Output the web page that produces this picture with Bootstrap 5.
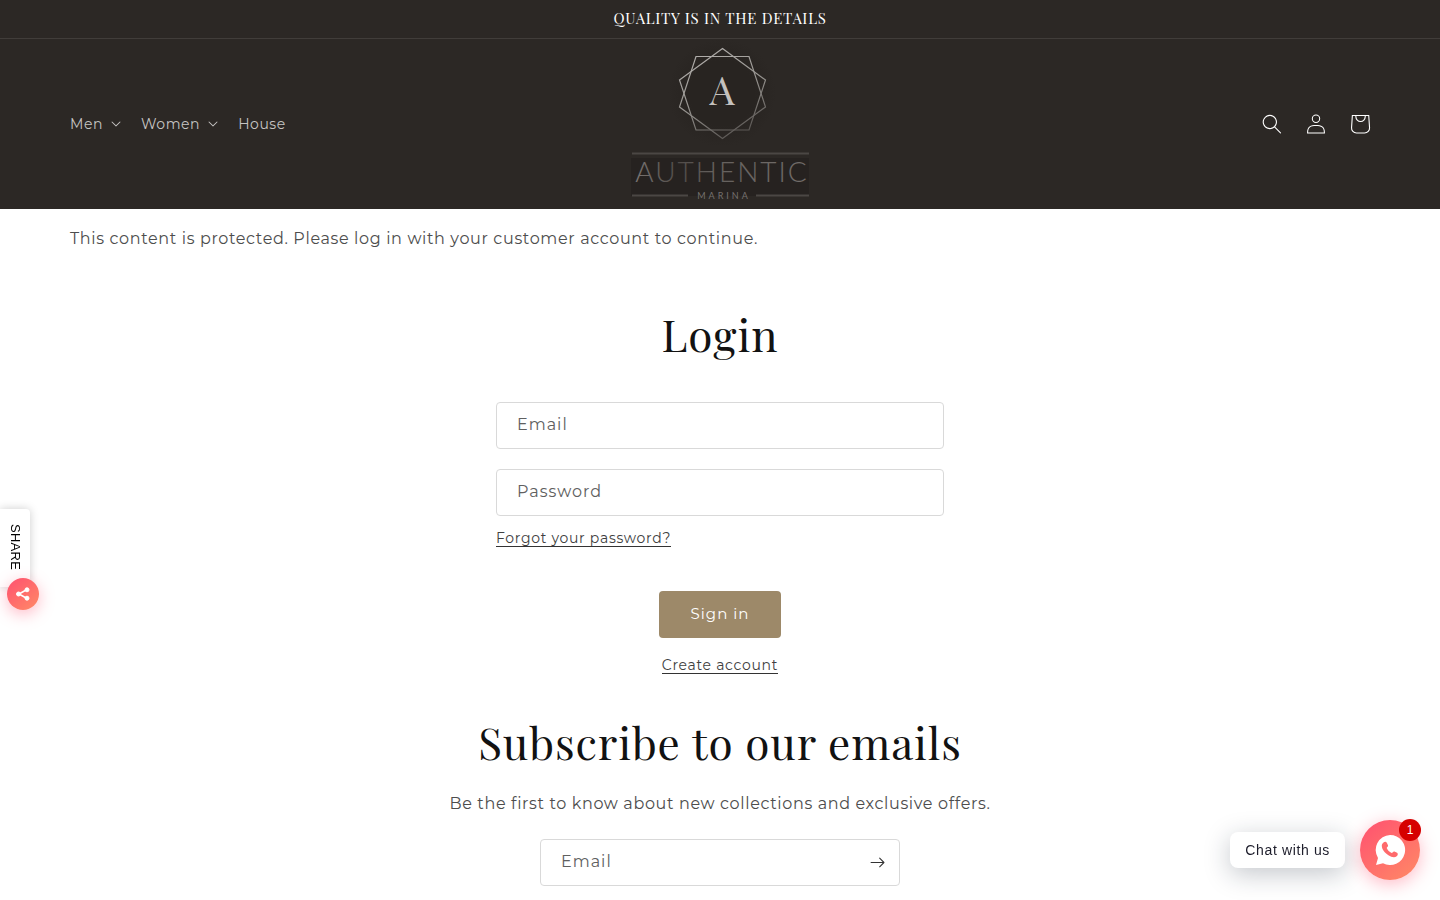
<!DOCTYPE html>
<html lang="en">
<head>
<meta charset="utf-8">
<meta name="viewport" content="width=device-width, initial-scale=1">
<title>Login – Authentic Marina</title>
<link href="https://cdn.jsdelivr.net/npm/bootstrap@5.3.0/dist/css/bootstrap.min.css" rel="stylesheet">
<script src="https://cdn.jsdelivr.net/npm/bootstrap@5.3.0/dist/js/bootstrap.bundle.min.js" defer></script>
<style>
:root{--ink:#121212;--soft:#4d4d4d;--dark:#2c2825;--sand:#9d8969;--coral:linear-gradient(140deg,#ff5070,#ff8a66)}
body{font-family:Montserrat,Inter,"Open Sans",sans-serif;font-size:16px;line-height:28px;letter-spacing:.04em;color:var(--soft);background:#fff}
.display-face{font-family:"Playfair Display","Liberation Serif",serif;font-weight:400}
.announcement{background:var(--dark);color:#fff;font-size:15px;line-height:22px;letter-spacing:.05em;padding:7px 8px 9px;border-bottom:1px solid #413d3a}
.site-header{background:var(--dark);color:#fff}
.page-width{max-width:1400px;padding-left:50px;padding-right:50px}
.header-side{flex:1 1 0}
.menu-item{background:none;border:0;padding:0;color:#c6c4c3;font-size:14px;letter-spacing:.04em;text-decoration:none}
.icon-slot{width:44px;height:44px}
.icons-end{margin-right:-12px}
.heading-lg{color:var(--ink);font-size:44px;line-height:60px;letter-spacing:.02em}
.login-box{max-width:448px;padding-top:3px}
.login-form{padding-top:38px}
.news-box{max-width:360px;margin-top:21px}
.field-wrap{margin-bottom:20px}
.field{height:47px;border:1px solid #d9d9d9;border-radius:4px;padding:0 20px;font-size:16px;letter-spacing:1px;color:var(--ink)}
.field-label{left:21px;top:9px;color:#606060;letter-spacing:1px;pointer-events:none}
.field:not(:placeholder-shown) + .field-label{display:none}
.text-link{display:inline-block;color:#404040;font-size:14px;line-height:16px;letter-spacing:.05em;text-decoration:none;padding-top:1px;border-bottom:1px solid #333}
.forgot{margin:-7px 0 44px}
.create{margin-top:18px}
.btn-sand{--bs-btn-color:#fff;--bs-btn-bg:var(--sand);--bs-btn-hover-color:#fff;--bs-btn-hover-bg:#8c795b;--bs-btn-border-radius:4px;width:122px;height:47px;font-size:15px;letter-spacing:1px;border:0}
.subscribe{padding-top:38px}
.subscribe-text{margin:18px 0 0}
.send{right:0;top:0;width:45px;height:47px;background:none;border:0}
.share{left:0;top:509px;width:39px}
.share-tab{width:30px;height:78px;background:#fff;border-radius:0 4px 4px 0;box-shadow:0 0 10px rgba(0,0,0,.2);font:13px "Liberation Sans",sans-serif;letter-spacing:.02em;color:#000;writing-mode:vertical-rl;padding:15px 0 0}
.share-btn{width:32px;height:32px;border:0;border-radius:50%;background:var(--coral);box-shadow:0 4px 16px rgba(255,80,112,.4);margin:-9px 0 0 7px;position:relative}
.chat{right:20px;bottom:20px;gap:15px}
.chat-label{background:#fff;color:#1d1d2b;border-radius:8px;padding:8px 15px;font:14px/20px "Liberation Sans",sans-serif;box-shadow:0 6px 26px rgba(20,30,50,.25)}
.chat-btn{width:60px;height:60px;border:0;border-radius:50%;background:var(--coral);box-shadow:0 4px 18px rgba(255,80,112,.4)}
.chat-count{right:-1px;top:-1px;width:22px;height:22px;border-radius:50%;background:#d60000;color:#fff;font:12px/22px "Liberation Sans",sans-serif;letter-spacing:0}
</style>
</head>
<body>
<div class="announcement text-center display-face">QUALITY IS IN THE DETAILS</div>
<header class="site-header">
  <div class="page-width container-fluid d-flex align-items-center">
    <nav class="header-side d-flex" aria-label="Main">
      <button class="menu-item d-flex align-items-center me-3" type="button"><span>Men</span>
        <svg class="ms-2 me-1" width="10" height="6" viewBox="0 0 10 6" fill="currentColor"><path d="M9.354.646a.5.5 0 00-.708 0L5 4.293 1.354.646a.5.5 0 00-.708.708l4 4a.5.5 0 00.708 0l4-4a.5.5 0 000-.708z"/></svg></button>
      <button class="menu-item d-flex align-items-center me-3" type="button"><span>Women</span>
        <svg class="ms-2 me-1" width="10" height="6" viewBox="0 0 10 6" fill="currentColor"><path d="M9.354.646a.5.5 0 00-.708 0L5 4.293 1.354.646a.5.5 0 00-.708.708l4 4a.5.5 0 00.708 0l4-4a.5.5 0 000-.708z"/></svg></button>
      <a class="menu-item" href="#">House</a>
    </nav>
    <a href="#" aria-label="Authentic Marina">
      <svg class="d-block" width="180" height="170" viewBox="0 0 180 170" fill="none">
        <defs>
          <linearGradient id="metal" gradientUnits="userSpaceOnUse" x1="60" y1="10" x2="100" y2="100"><stop stop-color="#b5b2af"/><stop offset=".55" stop-color="#96938f"/><stop offset="1" stop-color="#5a5653"/></linearGradient>
          <linearGradient id="word" x1="0" x2="1" y1="0" y2="0"><stop stop-color="#7a7572"/><stop offset=".25" stop-color="#504b48"/><stop offset=".45" stop-color="#64605d"/><stop offset="1" stop-color="#726d6a"/></linearGradient>
          <radialGradient id="shade"><stop offset=".6" stop-color="#282421"/><stop offset="1" stop-color="#282421" stop-opacity="0"/></radialGradient>
        </defs>
        <circle cx="92" cy="54" r="54" fill="url(#shade)"/>
        <path d="M1 119h178v38H1z" fill="#262220"/>
        <g stroke="url(#metal)" stroke-width="1.2">
          <path d="M92.500 9.500 135.500 41 119 91H66L49.500 41z"/>
          <path d="M92.500 99.500 49.500 68 66 17.500h53L135.500 68z"/>
        </g>
        <text x="92" y="66" text-anchor="middle" font-family="Playfair Display, Liberation Serif, serif" font-size="40" letter-spacing="0" fill="#c4c1be">A</text>
        <path d="M2 114.500h177" stroke="#4b4744" stroke-width="2"/>
        <path d="M2 156.500h56M126 156.500h53" stroke="#4b4744" stroke-width="2"/>
        <text x="92" y="143" text-anchor="middle" font-family="Lato, sans-serif" font-weight="300" font-size="28" letter-spacing="2" fill="url(#word)">AUTHENTIC</text>
        <text x="94" y="160" text-anchor="middle" font-family="Lato, sans-serif" font-size="9" letter-spacing="3" fill="#75716e">MARINA</text>
      </svg>
    </a>
    <div class="header-side d-flex justify-content-end">
      <div class="icons-end d-flex">
        <a class="icon-slot d-flex align-items-center justify-content-center text-white" href="#" aria-label="Search"><svg width="20" height="20" viewBox="0 0 18 19" fill="currentColor"><path fill-rule="evenodd" d="M11.03 11.68A5.784 5.784 0 112.85 3.5a5.784 5.784 0 018.18 8.18zm.26 1.12a6.78 6.78 0 11.72-.7l5.4 5.4a.5.5 0 11-.71.7l-5.41-5.4z"/></svg></a>
        <a class="icon-slot d-flex align-items-center justify-content-center text-white" href="#" aria-label="Log in"><svg width="20" height="20" viewBox="0 0 18 19" fill="currentColor"><path fill-rule="evenodd" d="M6 4.500a3 3 0 116 0 3 3 0 01-6 0zm3-4a4 4 0 100 8 4 4 0 000-8zm5.580 12.150c1.120.820 1.830 2.240 1.910 4.850H1.510c.080-2.600.790-4.030 1.900-4.850C4.660 11.750 6.500 11.500 9 11.500s4.350.260 5.580 1.150zM9 10.500c-2.500 0-4.650.240-6.170 1.350C1.270 12.980.500 14.930.500 18v.500h17V18c0-3.070-.770-5.020-2.330-6.150-1.520-1.100-3.670-1.350-6.170-1.350z"/></svg></a>
        <a class="icon-slot text-white" href="#" aria-label="Cart"><svg class="d-block" width="44" height="44" viewBox="0 0 40 40" fill="currentColor"><path fill-rule="evenodd" d="m15.750 11.800h-3.160l-.770 11.600a5 5 0 0 0 4.990 5.340h7.380a5 5 0 0 0 4.990-5.330l-.780-11.610zm0 1h-2.220l-.710 10.670a4 4 0 0 0 3.990 4.270h7.380a4 4 0 0 0 4-4.270l-.720-10.670h-2.220v.630a4.750 4.750 0 1 1 -9.500 0zm8.500 0h-7.500v.630a3.750 3.750 0 1 0 7.500 0z"/></svg></a>
      </div>
    </div>
  </div>
</header>
<main>
  <p class="page-width container-fluid pt-3 mb-0">This content is protected. Please log in with your customer account to continue.</p>
  <section class="login-box mx-auto text-center mt-5">
    <h1 class="display-face heading-lg mb-0">Login</h1>
    <form class="login-form d-flex flex-column align-items-center">
      <div class="field-wrap position-relative w-100">
        <input class="field w-100 d-block" id="email" type="email" placeholder=" ">
        <label class="field-label position-absolute" for="email">Email</label>
      </div>
      <div class="field-wrap position-relative w-100">
        <input class="field w-100 d-block" id="password" type="password" placeholder=" ">
        <label class="field-label position-absolute" for="password">Password</label>
      </div>
      <a class="text-link forgot align-self-start" href="#">Forgot your password?</a>
      <button class="btn btn-sand" type="submit">Sign in</button>
      <a class="text-link create" href="#">Create account</a>
    </form>
  </section>
  <section class="subscribe text-center">
    <h2 class="display-face heading-lg mb-0">Subscribe to our emails</h2>
    <p class="subscribe-text">Be the first to know about new collections and exclusive offers.</p>
    <form class="news-box mx-auto position-relative">
      <input class="field w-100 d-block" id="news" type="email" placeholder=" ">
      <label class="field-label position-absolute" for="news">Email</label>
      <button class="send position-absolute d-flex align-items-center justify-content-center" type="submit" aria-label="Subscribe"><svg width="15" height="11" viewBox="0 0 14 10" fill="#333"><path fill-rule="evenodd" d="M8.537.808a.5.5 0 01.817-.162l4 4a.5.5 0 010 .708l-4 4a.5.5 0 11-.708-.708L11.793 5.500H1a.5.5 0 010-1h10.793L8.646 1.354a.5.5 0 01-.109-.546z"/></svg></button>
    </form>
  </section>
</main>
<aside class="share position-fixed">
  <div class="share-tab d-flex align-items-center">SHARE</div>
  <button class="share-btn p-0 d-flex align-items-center justify-content-center" type="button" aria-label="Share"><svg width="16" height="14" viewBox="0 0 16 14" fill="#fff" stroke="#fff"><path d="M12 2.500 4 7l8 4.500" fill="none" stroke-width="1.600"/><circle cx="12" cy="2.800" r="2"/><circle cx="3.500" cy="7" r="2"/><circle cx="12" cy="11.200" r="2"/></svg></button>
</aside>
<aside class="chat position-fixed d-flex align-items-center">
  <div class="chat-label">Chat with us</div>
  <div class="position-relative"><button class="chat-btn p-0 d-flex align-items-center justify-content-center" type="button" aria-label="Open chat"><svg width="32" height="32" viewBox="0 0 32 32"><path fill="#fff" d="M16 1a15 15 0 1 1-7 28.200L2 31l2-7A15 15 0 0 1 16 1z"/><path fill="#ff6a6c" d="M9.500 8.500c1-1 2.600-1.200 3.300.2l1.200 2.500c.4.900-.9 1.900-1.300 2.700.9 2.300 2.700 4 5 5 .9-.3 1.600-1.800 2.700-1.400l2.700 1.300c1.200.7.700 2.500-.4 3.500-2 1.800-5.300 1-8.300-1-3.500-2.300-6.600-6-6.600-9.500 0-1.400.6-2.400 1.700-3.300z"/></svg></button>
  <span class="chat-count position-absolute text-center">1</span></div>
</aside>
</body>
</html>
